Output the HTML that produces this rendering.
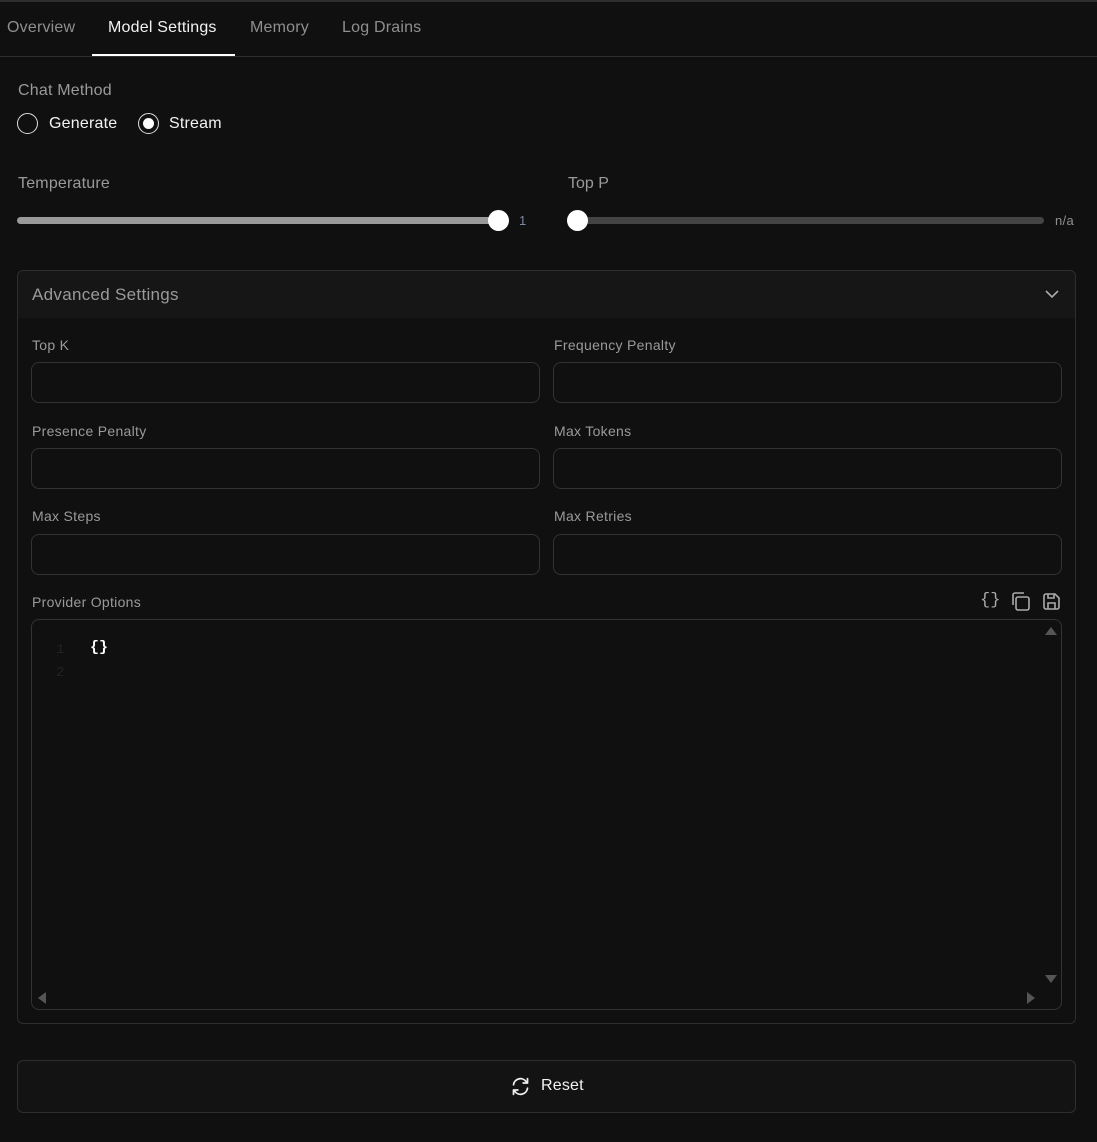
<!DOCTYPE html>
<html><head><meta charset="utf-8"><style>
*{box-sizing:border-box;margin:0;padding:0}
body{width:1097px;height:1142px;background:#101010;font-family:"Liberation Sans",sans-serif;position:relative;overflow:hidden;color:#ddd}
.a{position:absolute}
.tab{position:absolute;top:19px;font-size:16px;color:#8f8f8f;letter-spacing:0.2px}
.lbl{position:absolute;font-size:14px;color:#9a9a9a;letter-spacing:0.3px}
.inp{position:absolute;height:41px;width:509px;border:1px solid #333;border-radius:8px}
</style></head><body>
<div class="a" style="left:0;top:0;width:1097px;height:2px;background:#2e2e2e"></div>
<div class="tab" style="left:7px">Overview</div>
<div class="tab" style="left:108px;color:#f2f2f2">Model Settings</div>
<div class="tab" style="left:250px">Memory</div>
<div class="tab" style="left:342px">Log Drains</div>
<div class="a" style="left:0;top:56px;width:1097px;height:1px;background:#2e2e2e"></div>
<div class="a" style="left:92px;top:54px;width:143px;height:2px;background:#fff"></div>

<div class="a" style="left:18px;top:82px;font-size:16px;color:#9a9a9a;letter-spacing:0.2px">Chat Method</div>
<div class="a" style="left:17px;top:113px;width:21px;height:21px;border:1.5px solid #ddd;border-radius:50%"></div>
<div class="a" style="left:49px;top:115px;font-size:16px;color:#f2f2f2;letter-spacing:0.2px">Generate</div>
<div class="a" style="left:138px;top:113px;width:21px;height:21px;border:1.5px solid #ddd;border-radius:50%"><div style="margin:3.5px;width:11px;height:11px;border-radius:50%;background:#fff"></div></div>
<div class="a" style="left:169px;top:115px;font-size:16px;color:#f2f2f2;letter-spacing:0.2px">Stream</div>

<div class="a" style="left:18px;top:175px;font-size:16px;color:#9a9a9a;letter-spacing:0.2px">Temperature</div>
<div class="a" style="left:568px;top:175px;font-size:16px;color:#9a9a9a">Top P</div>
<div class="a" style="left:17px;top:217px;width:485px;height:7px;background:#9a9a9a;border-radius:4px"></div>
<div class="a" style="left:488px;top:210px;width:21px;height:21px;background:#fff;border-radius:50%"></div>
<div class="a" style="left:519px;top:213px;font-size:13px;color:#7a8aa0">1</div>
<div class="a" style="left:570px;top:217px;width:474px;height:7px;background:#444;border-radius:4px"></div>
<div class="a" style="left:567px;top:210px;width:21px;height:21px;background:#fff;border-radius:50%"></div>
<div class="a" style="left:1055px;top:213px;font-size:13px;color:#8f8f8f;letter-spacing:0.3px">n/a</div>

<div class="a" style="left:17px;top:270px;width:1059px;height:754px;border:1px solid #2e2e2e;border-radius:6px;overflow:hidden">
 <div style="height:47px;background:#161616"></div>
</div>
<div class="a" style="left:32px;top:285px;font-size:17px;color:#9a9a9a;letter-spacing:0.3px">Advanced Settings</div>
<svg class="a" style="left:1044px;top:288px" width="16" height="12" viewBox="0 0 16 12"><path d="M2 3l6 6 6-6" fill="none" stroke="#aaa" stroke-width="1.6"/></svg>

<div class="lbl" style="left:32px;top:337px">Top K</div>
<div class="lbl" style="left:554px;top:337px">Frequency Penalty</div>
<div class="inp" style="left:31px;top:362px"></div>
<div class="inp" style="left:553px;top:362px"></div>
<div class="lbl" style="left:32px;top:423px">Presence Penalty</div>
<div class="lbl" style="left:554px;top:423px">Max Tokens</div>
<div class="inp" style="left:31px;top:448px"></div>
<div class="inp" style="left:553px;top:448px"></div>
<div class="lbl" style="left:32px;top:508px">Max Steps</div>
<div class="lbl" style="left:554px;top:508px">Max Retries</div>
<div class="inp" style="left:31px;top:534px"></div>
<div class="inp" style="left:553px;top:534px"></div>
<div class="lbl" style="left:32px;top:594px">Provider Options</div>

<div class="a" style="left:980px;top:591px;font-size:17px;color:#aaa;font-family:'Liberation Mono',monospace">{}</div>
<svg class="a" style="left:1010px;top:591px" width="21" height="21" viewBox="0 0 21 21"><rect x="6" y="6" width="13" height="13" rx="2" fill="none" stroke="#aaa" stroke-width="1.6"/><path d="M3 14V4a2 2 0 0 1 2-2h9" fill="none" stroke="#aaa" stroke-width="1.6"/></svg>
<svg class="a" style="left:1042px;top:592px" width="19" height="19" viewBox="0 0 19 19"><path d="M2 4a2 2 0 0 1 2-2h9l4 4v9a2 2 0 0 1-2 2H4a2 2 0 0 1-2-2z M6 2v4h6V2 M6 17v-6h7v6" fill="none" stroke="#aaa" stroke-width="1.6"/></svg>

<div class="a" style="left:31px;top:619px;width:1031px;height:391px;border:1px solid #333;border-radius:8px"></div>
<div class="a" style="left:56px;top:639px;font-size:14px;color:#222;font-family:'Liberation Mono',monospace;line-height:23px">1<br>2</div>
<div class="a" style="left:90px;top:639px;font-size:15px;color:#fff;font-weight:bold;font-family:'Liberation Mono',monospace">{}</div>
<svg class="a" style="left:1045px;top:626px" width="12" height="10"><path d="M0 9L6 1l6 8z" fill="#555"/></svg>
<svg class="a" style="left:1045px;top:974px" width="12" height="10"><path d="M0 1l6 8 6-8z" fill="#555"/></svg>
<svg class="a" style="left:37px;top:992px" width="10" height="12"><path d="M9 0L1 6l8 6z" fill="#555"/></svg>
<svg class="a" style="left:1026px;top:992px" width="10" height="12"><path d="M1 0l8 6-8 6z" fill="#555"/></svg>

<div class="a" style="left:17px;top:1060px;width:1059px;height:53px;border:1px solid #2e2e2e;border-radius:6px;background:#131313"></div>
<svg class="a" style="left:510px;top:1076px" width="21" height="21" viewBox="0 0 24 24"><path d="M4 10a8 8 0 0 1 14.5-3.5L20 8M20 3v5h-5M20 14a8 8 0 0 1-14.5 3.5L4 16M4 21v-5h5" fill="none" stroke="#eee" stroke-width="2" stroke-linecap="round" stroke-linejoin="round"/></svg>
<div class="a" style="left:541px;top:1077px;font-size:16px;color:#f2f2f2;letter-spacing:0.2px">Reset</div>
</body></html>
